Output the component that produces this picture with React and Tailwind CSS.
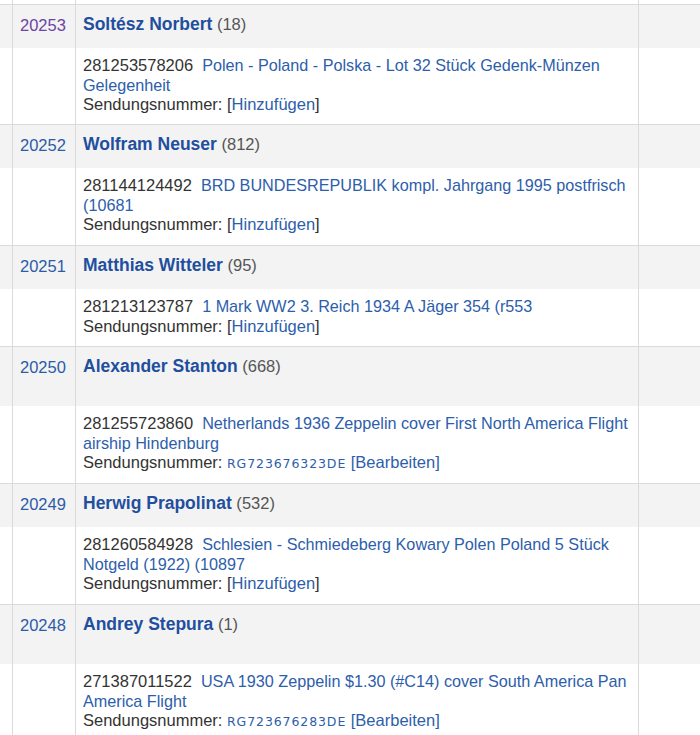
import React from 'react'

const orders = [
  { nr: '20253', visited: true, name: 'Soltész Norbert', score: '18', item: '281253578206', title: 'Polen - Poland - Polska - Lot 32 Stück Gedenk-Münzen Gelegenheit', tracking: null, itemH: 'h-[76px]' },
  { nr: '20252', name: 'Wolfram Neuser', score: '812', item: '281144124492', title: 'BRD BUNDESREPUBLIK kompl. Jahrgang 1995 postfrisch (10681', tracking: null, itemH: 'h-[77px]' },
  { nr: '20251', name: 'Matthias Witteler', score: '95', item: '281213123787', title: '1 Mark WW2 3. Reich 1934 A Jäger 354 (r553', tracking: null, itemH: 'h-[57px]' },
  { nr: '20250', name: 'Alexander Stanton', score: '668', tall: true, item: '281255723860', title: 'Netherlands 1936 Zeppelin cover First North America Flight airship Hindenburg', tracking: 'RG723676323DE', itemH: 'h-[77px]' },
  { nr: '20249', name: 'Herwig Prapolinat', score: '532', item: '281260584928', title: 'Schlesien - Schmiedeberg Kowary Polen Poland 5 Stück Notgeld (1922) (10897', tracking: null, itemH: 'h-[77px]' },
  { nr: '20248', name: 'Andrey Stepura', score: '1', tall: true, item: '271387011522', title: 'USA 1930 Zeppelin $1.30 (#C14) cover South America Pan America Flight', tracking: 'RG723676283DE', itemH: 'h-[77px]' },
]

const OrderRow = ({ order }) => {
  return (
    <div>
      {/* header row */}
      <div className={`flex border-t border-[#dadada] bg-[#f3f3f3] ${order.tall ? 'h-[60px]' : 'h-[44px]'}`}>
        <div className="w-[12px] shrink-0"></div>
        <div className="w-[63px] shrink-0 border-l border-[#dadada] pl-[7px] pt-[9px]">
          <a href="#" className={`text-[16.5px] leading-[20px] ${order.visited ? 'text-[#6b45a3]' : 'text-[#2c5ca8]'}`}>{order.nr}</a>
        </div>
        <div className="w-[563px] shrink-0 border-l border-[#dadada] pl-[7px] pt-[9px] leading-[20px]">
          <a href="#" className="text-[17.5px] font-bold text-[#1f4f9e]">{order.name}</a>
          <span className="text-[16.5px] text-[#555555]"> ({order.score})</span>
        </div>
        <div className="flex-1 border-l border-[#dadada]"></div>
      </div>

      {/* item row */}
      <div className={`flex bg-white ${order.itemH}`}>
        <div className="w-[12px] shrink-0"></div>
        <div className="w-[63px] shrink-0 border-l border-[#dadada]"></div>
        <div className="w-[563px] shrink-0 border-l border-[#dadada] pl-[7px] pt-[8px] text-[16.5px] leading-[19.5px] text-[#333333]">
          <div>
            <span>{order.item}</span>
            <a href="#" className="ml-[9px] text-[16.2px] text-[#2d5eab]">{order.title}</a>
          </div>
          <div>
            Sendungsnummer:{' '}
            {order.tracking ? (
              <>
                <span className="font-['DejaVu_Sans',sans-serif] text-[12.5px] tracking-[0.9px] text-[#2d5eab]">{order.tracking}</span>
                {' '}
                <span className="text-[#2d5eab]">[Bearbeiten]</span>
              </>
            ) : (
              <span>[<a href="#" className="text-[#2d5eab]">Hinzufügen</a>]</span>
            )}
          </div>
        </div>
        <div className="flex-1 border-l border-[#dadada]"></div>
      </div>
    </div>
  )
}

export default function App() {
  return (
    <div className="h-[735px] w-[700px] overflow-hidden bg-white font-['Liberation_Sans',Arial,sans-serif]">
      {/* tail of the previous order */}
      <div className="flex h-[4px]">
        <div className="w-[12px] shrink-0"></div>
        <div className="w-[63px] shrink-0 border-l border-[#dadada]"></div>
        <div className="w-[563px] shrink-0 border-l border-[#dadada]"></div>
        <div className="flex-1 border-l border-[#dadada]"></div>
      </div>
      {orders.map(order => (
        <OrderRow key={order.nr} order={order} />
      ))}
    </div>
  )
}
